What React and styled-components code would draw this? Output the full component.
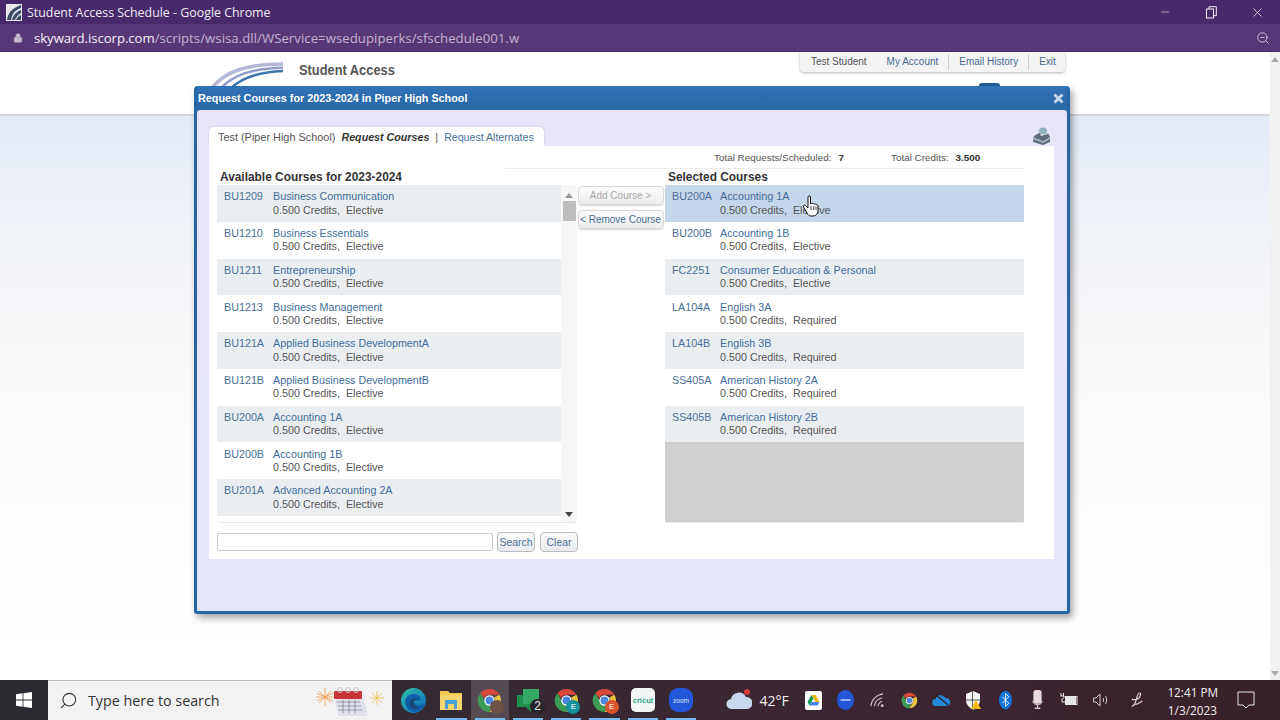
import React from 'react';
import styled, { createGlobalStyle } from 'styled-components';
import { Minus, X, Search as SearchIcon, ZoomOut, Lock } from 'lucide-react';

const Global = createGlobalStyle`
  html, body { margin: 0; padding: 0; width: 1280px; height: 720px; overflow: hidden; background: #fff; }
  #root { width: 1280px; height: 720px; }
  * { box-sizing: border-box; }
`;

const Page = styled.div`
  width: 1280px; height: 720px; display: flex; flex-direction: column;
  font-family: "Liberation Sans", Arial, sans-serif; overflow: hidden;
`;
const TitleBar = styled.div`
  height: 24px; background: #462a69; color: #f0ecf5; display: flex; align-items: center;
  padding-left: 6px; font: 13px "Open Sans", "Noto Sans", sans-serif;
`;
const TitleText = styled.span` margin-left: 5px; flex: 1; font-size: 12.4px; `;
const WinButtons = styled.div` display: flex; align-items: center; color: #f2eef6; `;
const WinButton = styled.div`
  width: 46px; height: 24px; display: flex; align-items: center; justify-content: center;
`;
const AddressBar = styled.div`
  height: 28px; background: #573877; display: flex; align-items: center; padding: 0 10px 0 13px;
  color: #c0b3d0; font: 14px "Open Sans", "Noto Sans", sans-serif; border-bottom: 1px solid #4a2d68;
`;
const Url = styled.span` margin-left: 11px; flex: 1; font-size: 13.2px; letter-spacing: .04px; `;
const Host = styled.span` color: #f4f0f8; letter-spacing: -0.05px; `;

const Viewport = styled.div` position: relative; flex: 1; display: flex; min-height: 0; background: #fff; `;
const Site = styled.div` flex: 1; display: flex; flex-direction: column; `;
const SiteHeader = styled.div`
  height: 64px; background: #fff; border-bottom: 2px solid #d6d6d8; position: relative;
  padding-left: 299px; padding-top: 10px; flex: none;
`;
const Brand = styled.div`
  font: bold 14.5px "Liberation Sans", sans-serif; color: #555; transform: scaleX(.885); transform-origin: left;
`;
const Logo = styled.svg` position: absolute; left: 205px; top: 9px; `;
const UserNav = styled.nav`
  position: absolute; left: 800px; top: 0; width: 265px; height: 20px; background: #f4f4f4;
  border-radius: 0 0 4px 4px; box-shadow: 0 1px 3px rgba(0,0,0,.3); display: flex; align-items: center;
  font-size: 10px; color: #555; padding-left: 11px; white-space: nowrap;
`;
const NavItem = styled.span`
  color: ${p => p.$plain ? '#555' : '#48688f'};
  padding-right: ${p => p.$pr || 0}px; margin-right: ${p => p.$mr || 0}px;
  border-right: ${p => p.$bar ? '1px solid #ccc' : 'none'}; line-height: 16px;
`;
const Tag = styled.div`
  position: absolute; left: 979px; top: 31px; width: 21px; height: 4px; background: #1d5c94; border-radius: 3px 3px 0 0;
`;
const SiteBody = styled.div` flex: 1; background: linear-gradient(#e3eaf6 0, #f3f5f8 150px, #fbfbfb 300px, #fff 100%); `;
const PageScroll = styled.div`
  width: 10px; background: #f1f1f1; display: flex; flex-direction: column; justify-content: space-between;
  align-items: center; padding: 5px 0 4px;
`;
const Tri = styled.i`
  display: block; width: 0; height: 0; border-left: 4px solid transparent; border-right: 4px solid transparent;
  ${p => p.$down ? `border-top: 5px solid ${p.$c || '#a0a0a0'};` : `border-bottom: 5px solid ${p.$c || '#a0a0a0'};`}
`;

const Dialog = styled.section`
  position: absolute; left: 194px; top: 34px; width: 876px; height: 528px; background: #2766a4;
  border-radius: 4px 4px 3px 3px; box-shadow: 3px 4px 7px rgba(0,0,0,.35);
  display: flex; flex-direction: column; padding: 0 3px 3px;
`;
const DialogTitle = styled.header`
  height: 24px; background: linear-gradient(#2f73b7, #2a67a6); color: #fff; display: flex; align-items: center;
  justify-content: space-between; padding: 0 3px 0 1px; font: bold 10.8px "Liberation Sans", sans-serif; flex: none;
`;
const DialogBody = styled.div`
  flex: 1; background: linear-gradient(#e8e5fb, #e5e6fa); border-radius: 3px 3px 0 0;
  padding: 17px 13px 0 12px; display: flex; flex-direction: column;
`;
const TabRow = styled.div` display: flex; justify-content: space-between; align-items: flex-end; height: 19px; flex: none; `;
const Tab = styled.div`
  background: #fff; height: 19px; width: 335px; border-radius: 5px 5px 0 0; box-shadow: 0 0 2px rgba(0,0,0,.2);
  padding-left: 9px; display: flex; align-items: center; font-size: 10.9px; color: #555; white-space: pre;
`;
const TabActive = styled.b` font-style: italic; font-size: 10.7px; color: #333; margin: 0 6px; `;
const TabLink = styled.span` color: #48709c; font-size: 10.6px; margin-left: 6px; `;
const Panel = styled.div`
  background: #fff; height: 413px; padding: 0 30px 0 8px; display: flex; flex-direction: column; flex: none;
`;
const Totals = styled.div`
  height: 23px; margin-left: 288px; padding-left: 209px; border-bottom: 1px solid #ececec; display: flex; align-items: center;
  font-size: 9.9px; color: #555; flex: none;
`;
const TotalValue = styled.b` color: #333; margin-left: ${p => p.$ml}px; margin-right: ${p => p.$mr || 0}px; `;
const Columns = styled.div` display: grid; grid-template-columns: 360px 88px 359px; flex: none; `;
const Heading = styled.h3`
  margin: 0; height: 16px; padding: 1px 0 0 ${p => p.$pl}px; font: bold 11.9px/15px "Liberation Sans", sans-serif; color: #333;
`;
const ListFrame = styled.div`
  height: 338px; display: flex; border: 1px solid #e6e6e6; border-width: 0 0 1px 0; border-radius: 2px; overflow: hidden;
  background: ${p => p.$fill || '#fff'};
`;
const Rows = styled.div` flex: 1; min-width: 0; `;
const Row = styled.div`
  height: 36.75px; display: grid; grid-template-columns: ${p => p.$code}px 1fr; padding: 5.4px 0 0 ${p => p.$pl}px;
  font-size: 10.75px; line-height: 13.2px; white-space: nowrap;
  background: ${p => p.$sel ? '#c5d5ea' : p.$alt ? '#ebeef1' : '#fff'};
`;
const Code = styled.span` color: #4a7099; `;
const CourseName = styled.div` color: #426d9c; `;
const Detail = styled.div` color: #555; white-space: pre; `;
const ScrollTrack = styled.div`
  width: 16px; background: #f6f6f6; display: flex; flex-direction: column; align-items: center;
  padding-top: 8px; flex: none;
`;
const ScrollThumb = styled.div` width: 13px; height: 20px; background: #bdbdbd; margin-top: 3px; `;
const ScrollDown = styled.div` margin-top: auto; margin-bottom: 5px; `;
const MoveButton = styled.button`
  width: 86px; height: 19px; margin: 0; padding: 0; border: 1px solid #d8d8d8; border-radius: 4px;
  background: linear-gradient(#fbfbfb, #ececec); box-shadow: 0 1px 1px rgba(0,0,0,.15); font: 10px "Liberation Sans", sans-serif;
  color: ${p => p.$off ? '#aaa' : '#4d6f94'}; white-space: nowrap;
`;
const MiddleStack = styled.div` padding-top: 17px; display: flex; flex-direction: column; align-items: center; gap: 5px; padding-right: 1px; `;
const SearchRow = styled.div` display: flex; align-items: center; margin-top: 9px; gap: 4px; flex: none; `;
const SearchInput = styled.input`
  width: 276px; height: 18px; border: 1px solid #c9c9c9; border-radius: 2px; background: #fff; padding: 0;
`;
const SmallButton = styled.button`
  width: 38px; height: 20px; padding: 0; border: 1px solid #bdbdbd; border-radius: 4px; margin-left: ${p => p.$ml || 0}px;
  background: linear-gradient(#fafafa, #e9ebee); color: #4d6f94; font: 10.4px "Liberation Sans", sans-serif;
`;
const Hand = styled.svg` position: absolute; left: 802px; top: 143px; `;

const Taskbar = styled.footer`
  height: 40px; flex: none; background: linear-gradient(90deg, #2b2a31 0, #352a33 400px, #3c2430 1000px, #392129 100%);
  display: flex; align-items: center; color: #eee; font: 12px "Open Sans", "Noto Sans", sans-serif;
`;
const StartButton = styled.div` width: 48px; height: 40px; display: flex; align-items: center; justify-content: center; flex: none; `;
const SearchBox = styled.div`
  width: 344px; height: 40px; background: #f2f2f2; border-top: 1px solid #bbb; display: flex; align-items: center; color: #333;
  padding: 0 6px 0 11px; font-size: 14.3px; margin-right: 2px; flex: none;
`;
const SearchPlaceholder = styled.span` margin-left: 10px; flex: 1; `;
const TaskIcon = styled.div`
  width: 38.3px; height: 40px; display: flex; align-items: center; justify-content: center; position: relative; flex: none;
  background: ${p => p.$active ? 'rgba(255,255,255,.16)' : 'transparent'};
  ${p => p.$run ? `&::after { content: ""; position: absolute; left: 4px; right: 4px; bottom: 0; height: 2px; background: #76b9ed; }` : ''}
`;
const Badge = styled.b`
  position: absolute; right: 2px; bottom: 6px; width: 15px; height: 15px; border-radius: 50%; background: #26262c; color: #e8e8e8;
  font: 12px/15px "Liberation Sans", sans-serif; text-align: center;
`;
const SmallBadge = styled.b`
  position: absolute; right: 5px; bottom: 6px; width: 14px; height: 14px; border-radius: 50%; background: ${p => p.$c}; color: #fff;
  font: 8px/14px "Liberation Sans", sans-serif; text-align: center;
`;
const Weather = styled.div` width: 68px; margin-left: 26px; margin-right: 3px; display: flex; align-items: center; gap: 7px; font-size: 14px; color: #f3f3f3; flex: none; `;
const Tray = styled.div` width: ${p => p.$w || 32}px; height: 40px; display: flex; align-items: center; justify-content: center; flex: none; `;
const Clock = styled.div` width: 50px; margin-left: 10px; text-align: center; font-size: 11.8px; line-height: 18.5px; color: #eee; padding-top: 2px; white-space: nowrap; flex: none; `;
const Notify = styled.div` width: 40px; display: flex; justify-content: center; margin-left: 9px; flex: none; `;

const available = [
  ['BU1209', 'Business Communication', 'Elective'],
  ['BU1210', 'Business Essentials', 'Elective'],
  ['BU1211', 'Entrepreneurship', 'Elective'],
  ['BU1213', 'Business Management', 'Elective'],
  ['BU121A', 'Applied Business DevelopmentA', 'Elective'],
  ['BU121B', 'Applied Business DevelopmentB', 'Elective'],
  ['BU200A', 'Accounting 1A', 'Elective'],
  ['BU200B', 'Accounting 1B', 'Elective'],
  ['BU201A', 'Advanced Accounting 2A', 'Elective'],
];
const selected = [
  ['BU200A', 'Accounting 1A', 'Elective'],
  ['BU200B', 'Accounting 1B', 'Elective'],
  ['FC2251', 'Consumer Education & Personal', 'Elective'],
  ['LA104A', 'English 3A', 'Required'],
  ['LA104B', 'English 3B', 'Required'],
  ['SS405A', 'American History 2A', 'Required'],
  ['SS405B', 'American History 2B', 'Required'],
];

const Course = ({ c, i, pl, code, sel }) => (
  <Row $alt={i % 2 === 0} $sel={sel} $pl={pl} $code={code}>
    <Code>{c[0]}</Code>
    <div>
      <CourseName>{c[1]}</CourseName>
      <Detail>0.500 Credits,  {c[2]}</Detail>
    </div>
  </Row>
);

const ChromeIcon = ({ s = 24 }) => (
  <svg width={s} height={s} viewBox="0 0 24 24">
    <path d="M12 1a11 11 0 0 1 9.5 5.5H12a5.5 5.5 0 0 0-5 3L3.3 5A11 11 0 0 1 12 1z" fill="#d9493c" />
    <path d="M21.500 6.500A11 11 0 0 1 12 23l4.700-8.200A5.500 5.500 0 0 0 16.500 9z" fill="#e8c43f" />
    <path d="M12 23A11 11 0 0 1 3.300 5l4.700 8.200a5.500 5.500 0 0 0 6.800 3.200z" fill="#3f9a55" />
    <circle cx="12" cy="12" r="5" fill="#fff" /><circle cx="12" cy="12" r="3.800" fill="#4c87df" />
  </svg>
);

export default function App() {
  return (
    <Page>
      <Global />
      <TitleBar>
        <svg width="16" height="17" viewBox="0 0 16 17">
          <rect width="16" height="17" fill="#e8e8ee" />
          <path d="M1 16C2 9 6 4 15 1v3C9 6 6 10 5 16zM6 16c1-5 4-8 9-10v3c-3 2-5 4-6 7zM10 16c1-2 2-4 5-5v5z" fill="#3e4a6a" />
        </svg>
        <TitleText>Student Access Schedule - Google Chrome</TitleText>
        <WinButtons>
          <WinButton><Minus size={12} strokeWidth={1.2} /></WinButton>
          <WinButton>
            <svg width="11" height="13" viewBox="0 0 11 13" fill="none" stroke="#f2eef6"><rect x=".5" y="3" width="7" height="9" /><path d="M3 3V.7h7.300v9H7.500" /></svg>
          </WinButton>
          <WinButton><X size={15} strokeWidth={1.2} /></WinButton>
        </WinButtons>
      </TitleBar>
      <AddressBar>
        <Lock size={10} fill="#c4b9d2" strokeWidth={1.5} />
        <Url><Host>skyward.iscorp.com</Host>/scripts/wsisa.dll/WService=wsedupiperks/sfschedule001.w</Url>
        <ZoomOut size={14} strokeWidth={1.5} color="#dcd4e6" />
      </AddressBar>
      <Viewport>
        <Site>
          <SiteHeader>
            <Logo width="80" height="28" viewBox="0 0 80 28" fill="none">
              <path d="M6 28C20 10 42 3 78 3" stroke="#b4b8d8" strokeWidth="3.500" />
              <path d="M15 28C28 14 46 7.500 78 6.800" stroke="#8f9dca" strokeWidth="2.500" />
              <path d="M25 28C36 17 52 11 78 10" stroke="#3f75ad" strokeWidth="2.500" />
            </Logo>
            <Brand>Student Access</Brand>
            <UserNav>
              <NavItem $plain $mr={20}>Test Student</NavItem>
              <NavItem $bar $pr={10} $mr={10}>My Account</NavItem>
              <NavItem $bar $pr={10} $mr={10}>Email History</NavItem>
              <NavItem>Exit</NavItem>
            </UserNav>
            <Tag />
          </SiteHeader>
          <SiteBody />
        </Site>
        <PageScroll><Tri $c="#aaa" /><Tri $down $c="#aaa" /></PageScroll>

        <Dialog>
          <DialogTitle>
            <span>Request Courses for 2023-2024 in Piper High School</span>
            <svg width="11" height="11" viewBox="0 0 11 11" stroke="#c9d8e8" strokeWidth="2.800"><path d="M1.500 1.500l8 8M9.500 1.500l-8 8" /></svg>
          </DialogTitle>
          <DialogBody>
            <TabRow>
              <Tab>Test (Piper High School)<TabActive>Request Courses</TabActive>|<TabLink>Request Alternates</TabLink></Tab>
              <svg width="20" height="20" viewBox="0 0 20 20" style={{ marginRight: 3 }}>
                <path d="M3 10l5-3h9l2 4v5l-7 3-10-3z" fill="#5f6c7c" />
                <path d="M7 3l7-2 3 7-7 2z" fill="#dfe8ec" />
                <ellipse cx="12" cy="5" rx="4" ry="3.500" fill="#8fb0bf" />
                <path d="M2 11l10 4 7-4v2l-7 4-10-4z" fill="#a7b2bf" />
              </svg>
            </TabRow>
            <Panel>
              <Totals>
                Total Requests/Scheduled:<TotalValue $ml={7} $mr={47}>7</TotalValue>
                Total Credits:<TotalValue $ml={7}>3.500</TotalValue>
              </Totals>
              <Columns>
                <div>
                  <Heading $pl={3}>Available Courses for 2023-2024</Heading>
                  <ListFrame>
                    <Rows>{available.map((c, i) => <Course key={c[0]} c={c} i={i} pl={7} code={49} />)}</Rows>
                    <ScrollTrack>
                      <Tri $c="#999" />
                      <ScrollThumb />
                      <ScrollDown><Tri $down $c="#444" /></ScrollDown>
                    </ScrollTrack>
                  </ListFrame>
                </div>
                <div>
                  <MiddleStack>
                    <MoveButton $off>Add Course &gt;</MoveButton>
                    <MoveButton>&lt; Remove Course</MoveButton>
                  </MiddleStack>
                </div>
                <div>
                  <Heading $pl={3}>Selected Courses</Heading>
                  <ListFrame $fill="#d0d0d0">
                    <Rows>{selected.map((c, i) => <Course key={c[0]} c={c} i={i} pl={7} code={48} sel={i === 0} />)}</Rows>
                  </ListFrame>
                </div>
              </Columns>
              <SearchRow>
                <SearchInput aria-label="Search courses" />
                <SmallButton>Search</SmallButton>
                <SmallButton $ml={1}>Clear</SmallButton>
              </SearchRow>
            </Panel>
          </DialogBody>
        </Dialog>
        <Hand width="18" height="22" viewBox="0 0 18 22">
          <path d="M6 2c0-1.500 2.500-1.500 2.500 0v7l1-.5c1-.5 2 0 2.200.6 1-.5 2-.2 2.300.6 1-.3 2 .2 2 1.300v4c0 3-1.500 6-5 6H9c-2 0-3-1-4-3L1.500 12c-.8-1.500.8-2.500 2-1.500L6 13z" fill="#fff" stroke="#111" strokeWidth="1" strokeLinejoin="round" />
          <path d="M9 11v4M11.800 11v4M14 11.500V15" stroke="#111" strokeWidth=".8" />
        </Hand>
      </Viewport>
      <Taskbar>
        <StartButton>
          <svg width="16" height="16" viewBox="0 0 16 16" fill="#fff"><path d="M0 2.200l6.600-.9v6.300H0zM7.400 1.200L16 0v7.600H7.400zM0 8.400h6.600v6.300L0 13.800zM7.400 8.400H16V16l-8.600-1.200z" /></svg>
        </StartButton>
        <SearchBox>
          <SearchIcon size={19} strokeWidth={1.4} style={{ transform: 'scaleX(-1)' }} />
          <SearchPlaceholder>Type here to search</SearchPlaceholder>
          <svg width="70" height="34" viewBox="0 0 70 34" style={{ marginRight: 2 }}>
            <g stroke="#ef9a4a" strokeWidth=".8"><path d="M2 13h18M11 4v18M5 7l12 12M17 7L5 19M3 9l16 8M3 17l16-8" /></g>
            <g stroke="#efc04a" strokeWidth=".8"><path d="M56 14h14M63 7v14M58 9l10 10M68 9L58 19" /></g>
            <path d="M20 9h28l6 23H24z" fill="#dfe2ea" />
            <rect x="20" y="7" width="28" height="8" rx="1" fill="#c9343a" />
            <g fill="none" stroke="#c9c9d2" strokeWidth="1"><circle cx="26" cy="6" r="2.500" /><circle cx="34" cy="6" r="2.500" /><circle cx="42" cy="6" r="2.500" /></g>
            <path d="M23 18h23M24 22h23M24 26h24M29 16v13M35 16v13M41 16v13" stroke="#778" strokeWidth=".7" />
          </svg>
        </SearchBox>
        <TaskIcon>
          <svg width="25" height="25" viewBox="0 0 24 24">
            <defs><linearGradient id="edge" x1="0" y1="0" x2="1" y2="1"><stop offset="0" stopColor="#30c3a4" /><stop offset="1" stopColor="#0a66c2" /></linearGradient></defs>
            <circle cx="12" cy="12" r="12" fill="url(#edge)" />
            <path d="M4 13c0-5 5-8 10-7 4 1 6 4 5 6h-6c-1 3 3 6 10 3-2 5-7 9-12 8-5-2-7-6-7-10z" fill="#0f5ea8" />
            <path d="M8 15c0-3 3-5 5-5s3 2 2 2h-3c-1 3 2 6 6 7-5 3-10-1-10-4z" fill="#1b2b40" opacity=".5" />
          </svg>
        </TaskIcon>
        <TaskIcon $run>
          <svg width="22" height="20" viewBox="0 0 22 20"><path d="M0 1h8l2 2h12v17H0z" fill="#f4c84c" /><rect y="5" width="22" height="15" fill="#f7d56e" /><path d="M5 10h12v9h-3v-5H8v5H5z" fill="#4c9fd6" /></svg>
        </TaskIcon>
        <TaskIcon $active $run>
          <ChromeIcon s={25} />
          <SmallBadge $c="#6e5245" />
        </TaskIcon>
        <TaskIcon $run>
          <svg width="22" height="24" viewBox="0 0 22 24"><path d="M6 1h16v16h-6l-2 0v7l-5-5H0V7h6z" fill="#1f8f4d" /><rect x="6" y="1" width="16" height="15" fill="#36a866" /></svg>
          <Badge>2</Badge>
        </TaskIcon>
        <TaskIcon $run><ChromeIcon s={25} /><SmallBadge $c="#17919c">E</SmallBadge></TaskIcon>
        <TaskIcon $run><ChromeIcon s={25} /><SmallBadge $c="#d9552b">E</SmallBadge></TaskIcon>
        <TaskIcon $run>
          <svg width="24" height="24" viewBox="0 0 24 24"><rect width="24" height="24" rx="5" fill="#f2f6f4" /><text x="12" y="14.500" textAnchor="middle" fontSize="7.500" fontWeight="bold" fill="#2aa88a" fontFamily="Liberation Sans">cricut</text></svg>
        </TaskIcon>
        <TaskIcon $run>
          <svg width="24" height="24" viewBox="0 0 24 24"><rect width="24" height="24" rx="9" fill="#2456d8" /><text x="12" y="14.500" textAnchor="middle" fontSize="6.500" fill="#dde6ff" fontFamily="Liberation Sans">zoom</text></svg>
        </TaskIcon>
        <Weather>
          <svg width="26" height="22" viewBox="0 0 26 22"><path d="M6 20a5 5 0 0 1-1-10 8 8 0 0 1 15-2 6 6 0 0 1 1 12z" fill="#c9d8ec" /><circle cx="21" cy="3" r="3" fill="#d93a3a" /></svg>
          42°F
        </Weather>
        <Tray>
          <svg width="17" height="19" viewBox="0 0 17 19"><rect width="17" height="19" rx="2" fill="#fff" /><path d="M6.500 4h4l4 7h-4z" fill="#f4b400" /><path d="M6.500 4l-4 7 2 3.500 4-7z" fill="#0f9d58" /><path d="M4.500 14.500h8l2-3.500h-8z" fill="#4285f4" /></svg>
        </Tray>
        <Tray>
          <svg width="17" height="20" viewBox="0 0 17 20"><ellipse cx="8.500" cy="10" rx="8.500" ry="10" fill="#2456d8" /><rect x="3.500" y="9" width="10" height="2" fill="#cfdcff" opacity=".7" /></svg>
        </Tray>
        <Tray>
          <svg width="14" height="14" viewBox="0 0 16 16" fill="none" stroke="#c4bcc0" strokeWidth="1.300"><path d="M1 15C1.500 8 7 2 15 1M5 15c.5-4 3.500-8 9-9.500M9 15c.5-2.500 2-4.500 5-5.500" /><circle cx="14" cy="14.500" r="1" fill="#e8e0e4" /></svg>
        </Tray>
        <Tray><ChromeIcon s={17} /></Tray>
        <Tray>
          <svg width="18" height="12" viewBox="0 0 18 12"><path d="M4 12a3.500 3.500 0 0 1-.5-7 5.500 5.500 0 0 1 10-1 4 4 0 0 1 1 8z" fill="#2488d8" /><path d="M3 0l13 11" stroke="#2b2028" strokeWidth="1.200" /></svg>
        </Tray>
        <Tray>
          <svg width="16" height="19" viewBox="0 0 16 19"><path d="M1 3l7-3 7 3v6c0 5-4 8-7 10-3-2-7-5-7-10z" fill="#f6f6f6" /><path d="M7.500 0v19M1 9h14" stroke="#333" strokeWidth=".8" /><path d="M11 9l5 9H6z" fill="#f2bb1a" /></svg>
        </Tray>
        <Tray>
          <svg width="13" height="20" viewBox="0 0 14 20"><ellipse cx="7" cy="10" rx="7" ry="10" fill="#1172d6" /><path d="M3.500 6.500l7 7L7 17V3l3.500 3.500-7 7" stroke="#fff" strokeWidth="1" fill="none" /></svg>
        </Tray>
        <Tray>
          <svg width="11" height="22" viewBox="0 0 12 22"><rect x="1.500" width="9" height="15" rx="3" fill="#e6dadf" /><path d="M1 12c0 3 2 4 5 4s5-1 5-4" stroke="#e6dadf" fill="none" /><path d="M6 16v3M3 20h6" stroke="#d8ccd2" strokeWidth="1.500" /></svg>
        </Tray>
        <Tray>
          <svg width="18" height="14" viewBox="0 0 18 14" fill="none" stroke="#e6e6e6" strokeWidth="1"><rect x="5.500" y="3.500" width="11.500" height="8" /><rect x="6.500" y="4.500" width="9" height="6" fill="#e6e6e6" /><path d="M1 0v3M3.500 0v3M.5 3h3.500v1c0 1-1 2-2 2v3h3.500" /></svg>
        </Tray>
        <Tray>
          <svg width="16" height="14" viewBox="0 0 16 14" fill="none" stroke="#ccc" strokeWidth="1"><path d="M.5 5h2.500l4-4v12l-4-4H.5zM10 5c.8 1 .8 3 0 4M12.500 3c1.500 2 1.500 6 0 8" /></svg>
        </Tray>
        <Tray $w={40}>
          <svg width="14" height="16" viewBox="0 0 16 18" fill="none" stroke="#d4ccd0" strokeWidth="1.400"><path d="M2 16c3 0 4-3 5-7s2-8 4-8 1 4-1 6-6 2-8 1M5 14c3 1 6-2 9-4" /></svg>
        </Tray>
        <Clock>12:41 PM<br />1/3/2023</Clock>
        <Notify>
          <svg width="18" height="18" viewBox="0 0 18 18" fill="none" stroke="#e5e5e5" strokeWidth="1"><path d="M1 1h16v13h-5l-3 3-3-3H1z" /></svg>
        </Notify>
      </Taskbar>
    </Page>
  );
}
